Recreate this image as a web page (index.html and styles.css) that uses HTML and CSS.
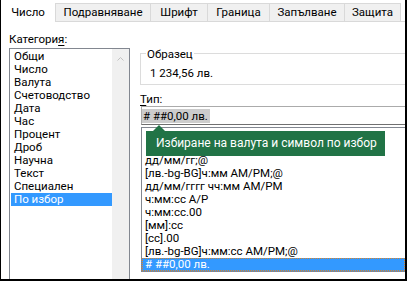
FILE: index.html
```html
<!DOCTYPE html>
<html lang="bg">
<head>
    <meta charset="UTF-8">
    <meta name="viewport" content="width=device-width, initial-scale=1.0">
    <title>Форматиране на клетки</title>
    <link rel="stylesheet" href="styles.css">
</head>
<body>
    <div class="dialog">
        <div class="tabs">
            <div class="tab active tab-number">Число</div>
            <div class="tab tab-align">Подравняване</div>
            <div class="tab tab-font">Шрифт</div>
            <div class="tab tab-border">Граница</div>
            <div class="tab tab-fill">Запълване</div>
            <div class="tab tab-protect">Защита</div>
            <div class="tabs-rest"></div>
        </div>
        <div class="panel">
            <div class="category">
                <div class="label">Категори<u>я</u>:</div>
                <div class="listbox">
                    <ul class="cat-items">
                        <li>Общи</li>
                        <li>Число</li>
                        <li>Валута</li>
                        <li>Счетоводство</li>
                        <li>Дата</li>
                        <li>Час</li>
                        <li>Процент</li>
                        <li>Дроб</li>
                        <li>Научна</li>
                        <li>Текст</li>
                        <li>Специален</li>
                        <li class="selected">По избор</li>
                    </ul>
                    <div class="scrollbar">
                        <svg width="7" height="4" viewBox="0 0 7 4">
                            <polyline points="0.5,3.5 3.5,0.5 6.5,3.5" fill="none" stroke="#c1c1c1" stroke-width="1"/>
                        </svg>
                    </div>
                </div>
            </div>
            <div class="format">
                <div class="sample">
                    <div class="sample-title">Образец</div>
                    <div class="sample-value">1 234,56 лв.</div>
                </div>
                <div class="label type-label"><u>Т</u>ип:</div>
                <div class="type-input"><span class="type-selection"># ##0,00 лв.</span></div>
                <div class="type-list">
                    <ul class="type-items">
                        <li></li>
                        <li></li>
                        <li>дд/мм/гг;@</li>
                        <li>[лв.-bg-BG]ч:мм AM/PM;@</li>
                        <li>дд/мм/гггг чч:мм AM/PM</li>
                        <li>ч:мм:сс A/P</li>
                        <li>ч:мм:сс.00</li>
                        <li>[мм]:сс</li>
                        <li>[сс].00</li>
                        <li>[лв.-bg-BG]ч:мм:сс AM/PM;@</li>
                        <li class="selected"># ##0,00 лв.</li>
                    </ul>
                    <div class="tooltip">Избиране на валута и символ по избор</div>
                </div>
            </div>
        </div>
    </div>
</body>
</html>
```

FILE: styles.css
```css
body {
    margin: 0;
    font-family: Roboto, "Noto Sans", sans-serif;
    font-size: 11.5px;
    color: #000000;
    background-color: #ffffff;
    overflow: hidden;
}
ul {
    margin: 0;
    padding: 0;
    list-style: none;
}
u {
    text-decoration-thickness: 1px;
    text-underline-offset: 2px;
}
.dialog {
    width: 407px;
    height: 281px;
    box-sizing: border-box;
    border-left: 1px solid #000000;
    border-right: 2px solid #000000;
    border-bottom: 2px solid #000000;
    overflow: hidden;
}
.tabs {
    display: flex;
    align-items: flex-end;
    height: 22px;
}
.tab {
    box-sizing: border-box;
    height: 19px;
    border: 1px solid #d9d9d9;
    border-right: none;
    background-color: #f0f0f0;
    text-align: center;
    line-height: 17px;
    white-space: nowrap;
}
.tab.active {
    height: 22px;
    border: none;
    background-color: #ffffff;
    line-height: 24px;
}
.tab-number { width: 54px; }
.tab-align { width: 95px; }
.tab-font { width: 57px; }
.tab-border { width: 62px; }
.tab-fill { width: 75px; }
.tab-protect {
    width: 57px;
    border-right: 1px solid #d9d9d9;
}
.tabs-rest {
    flex: 1;
    align-self: stretch;
    border-bottom: 1px solid #d9d9d9;
}
.panel {
    display: grid;
    grid-template-columns: 121px 1fr;
    column-gap: 10px;
    padding: 10px 0 0 8px;
}
.label {
    line-height: 15px;
}
.listbox {
    display: flex;
    height: 240px;
    margin-top: 1px;
    border: 1px solid #828790;
    box-sizing: border-box;
}
.cat-items {
    width: 101px;
    padding: 1px 0 0 1px;
}
.cat-items li,
.type-items li {
    height: 13px;
    line-height: 13px;
    white-space: nowrap;
}
.cat-items li {
    padding-left: 3px;
}
.selected {
    background-color: #3399ff;
    color: #ffffff;
}
.scrollbar {
    width: 17px;
    display: flex;
    justify-content: center;
    padding-top: 8px;
    box-sizing: border-box;
    background-color: #f0f0f0;
}
.format {
    min-width: 0;
}
.sample {
    margin-top: 21px;
    height: 32px;
    box-sizing: border-box;
    border: 1px solid #dcdcdc;
    border-right: none;
    padding-left: 9px;
}
.sample-title {
    width: fit-content;
    margin: -7px 0 0 -4px;
    padding: 0 1px;
    background-color: #ffffff;
    line-height: 15px;
}
.sample-value {
    margin-top: 4px;
    line-height: 15px;
}
.type-label {
    margin-top: 7px;
    line-height: 14px;
}
.type-input {
    display: flex;
    align-items: center;
    height: 19px;
    margin-left: 1px;
    box-sizing: border-box;
    border: 1px solid #ababab;
    border-bottom-color: #707070;
    border-right: none;
}
.type-selection {
    padding: 0 2px 0 1px;
    line-height: 14px;
    background-color: #cccccc;
    white-space: nowrap;
}
.type-list {
    position: relative;
    margin: 2px 0 0 1px;
    border: 1px solid #828790;
    border-right: none;
}
.type-items li {
    padding-left: 3px;
}
.type-items .selected {
    outline: 1px dotted #d7832b;
    outline-offset: -1px;
}
.tooltip {
    position: absolute;
    left: 4px;
    top: 3px;
    width: 239px;
    height: 25px;
    box-sizing: border-box;
    padding-left: 10px;
    background-color: #217346;
    color: #ffffff;
    font-size: 12px;
    line-height: 25px;
    white-space: nowrap;
}
.tooltip::before {
    content: "";
    position: absolute;
    left: 7px;
    top: -6px;
    border-left: 6px solid transparent;
    border-right: 6px solid transparent;
    border-bottom: 6px solid #217346;
}
```
